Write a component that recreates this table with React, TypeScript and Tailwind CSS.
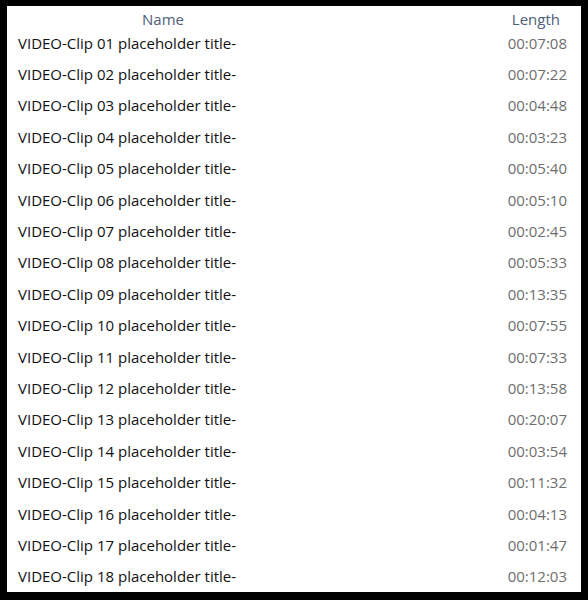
const rows: [string, string][] = [
  ["VIDEO-Clip 01 placeholder title-", "00:07:08"],
  ["VIDEO-Clip 02 placeholder title-", "00:07:22"],
  ["VIDEO-Clip 03 placeholder title-", "00:04:48"],
  ["VIDEO-Clip 04 placeholder title-", "00:03:23"],
  ["VIDEO-Clip 05 placeholder title-", "00:05:40"],
  ["VIDEO-Clip 06 placeholder title-", "00:05:10"],
  ["VIDEO-Clip 07 placeholder title-", "00:02:45"],
  ["VIDEO-Clip 08 placeholder title-", "00:05:33"],
  ["VIDEO-Clip 09 placeholder title-", "00:13:35"],
  ["VIDEO-Clip 10 placeholder title-", "00:07:55"],
  ["VIDEO-Clip 11 placeholder title-", "00:07:33"],
  ["VIDEO-Clip 12 placeholder title-", "00:13:58"],
  ["VIDEO-Clip 13 placeholder title-", "00:20:07"],
  ["VIDEO-Clip 14 placeholder title-", "00:03:54"],
  ["VIDEO-Clip 15 placeholder title-", "00:11:32"],
  ["VIDEO-Clip 16 placeholder title-", "00:04:13"],
  ["VIDEO-Clip 17 placeholder title-", "00:01:47"],
  ["VIDEO-Clip 18 placeholder title-", "00:12:03"],
];

export default function App() {
  return (
    <div className="h-[600px] w-[588px] bg-black pb-[8px] pl-[7px] pr-[7px] pt-[6px] font-['Open_Sans',sans-serif]">
      <div className="flex h-full w-full flex-col bg-white">
        <div className="flex h-[21px] items-center pt-[4px] text-[15px] leading-[20px] text-[#4d6079]">
          <div className="w-[312px] text-center">Name</div>
          <div className="flex-1 pr-[21px] text-right">Length</div>
        </div>
        {rows.map(([name, len]) => (
          <div key={name} className="flex h-[31.4px] items-center text-[15px] leading-[20px]">
            <div className="w-[470px] truncate pl-[11px] text-[#111111]">{name}</div>
            <div className="flex-1 pr-[14px] text-right text-[#6e6e6e]">{len}</div>
          </div>
        ))}
      </div>
    </div>
  );
}
